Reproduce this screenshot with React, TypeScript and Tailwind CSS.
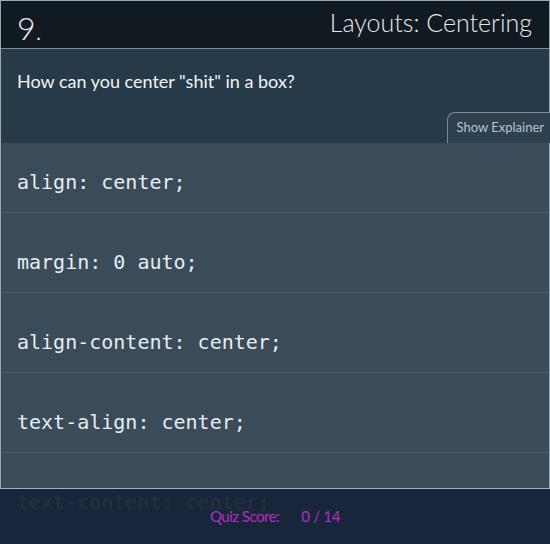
import React from 'react';

const answers = [
    'align: center;',
    'margin: 0 auto;',
    'align-content: center;',
    'text-align: center;',
    'text-content: center;',
];

export default function App() {
    return (
        <div className="relative w-[550px] h-[544px] overflow-hidden bg-[#17263a] font-['Lato',sans-serif]">
            <div className="flex flex-col h-[489px] border border-[#9ba6ae] border-b-[#a7b1b8]">
                <div className="shrink-0 flex items-end justify-between h-[48px] px-4 pb-[4px] bg-[#121a21] border-b border-[#7f8b94] text-[#e6e9ec]">
                    <span className="text-[32px] font-light leading-none">9<span className="text-[26px]">.</span></span>
                    <span className="text-[25px] font-light leading-none pb-[9px] pr-[1px]">Layouts: Centering</span>
                </div>
                <div className="shrink-0 relative h-[94px] bg-[#273a4a]">
                    <p className="pt-[19px] pl-4 text-[18px] text-[#f2f4f6]">How can you center "shit" in a box?</p>
                    <div className="absolute right-[-12px] bottom-0 h-[31px] pl-2 pr-4 flex items-center bg-[#2d4151] border border-b-0 border-[#7b8994] rounded-tl-[8px] text-[13px] text-[#b9c3cb]">
                        Show Explainer
                    </div>
                </div>
                <div className="flex-1 min-h-0 bg-[#3a4b59]">
                    {answers.map((a, i) => (
                        <div
                            key={a}
                            className={`shrink-0 flex items-end pb-[15px] px-4 border-b border-[#4b5b68] font-['DejaVu_Sans_Mono',monospace] text-[20px] text-[#e8ecef] ${i === 0 ? 'h-[70px]' : 'h-[80px]'}`}
                        >
                            {a}
                        </div>
                    ))}
                </div>
            </div>
            <div className="absolute left-0 right-0 bottom-0 h-[55px] bg-[#17263a]/[0.95] flex items-center justify-center gap-[22px] pb-[1px] text-[15px] text-[#b92cc0]">
                <span className="tracking-[-0.5px]">Quiz Score:</span>
                <span className="tracking-[-0.3px]">0 / 14</span>
            </div>
        </div>
    );
}
